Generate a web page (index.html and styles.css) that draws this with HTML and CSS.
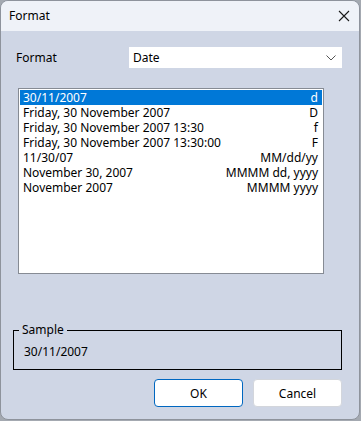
FILE: index.html
```html
<!DOCTYPE html>
<html lang="en">

<head>
    <meta charset="UTF-8">
    <meta name="viewport" content="width=device-width, initial-scale=1.0">
    <title>Format</title>

    <link rel="stylesheet" href="styles.css">
</head>

<body>

    <div class="window">

        <!-- Title bar -->
        <div class="titlebar">
            <span class="title">Format</span>
            <svg class="close" width="12" height="12" viewBox="0 0 12 12">
                <path d="M1 1 L11 11 M11 1 L1 11" stroke="#1a1a1a" stroke-width="1.1" fill="none" />
            </svg>
        </div>

        <div class="content">
            <div class="field-row">
                <label class="field-label">Format</label>
                <div class="combo">
                    <span>Date</span>
                    <svg width="10" height="6" viewBox="0 0 10 6">
                        <path d="M0.5 0.5 L5 5 L9.5 0.5" stroke="#555" stroke-width="1" fill="none" />
                    </svg>
                </div>
            </div>

            <!-- Format list -->
            <div class="listbox">
                <div class="list-row selected"><span>30/11/2007</span><span>d</span></div>
                <div class="list-row"><span>Friday, 30 November 2007</span><span>D</span></div>
                <div class="list-row"><span>Friday, 30 November 2007 13:30</span><span>f</span></div>
                <div class="list-row"><span>Friday, 30 November 2007 13:30:00</span><span>F</span></div>
                <div class="list-row"><span>11/30/07</span><span>MM/dd/yy</span></div>
                <div class="list-row"><span>November 30, 2007</span><span>MMMM dd, yyyy</span></div>
                <div class="list-row"><span>November 2007</span><span>MMMM yyyy</span></div>
            </div>

            <fieldset class="sample">
                <legend>Sample</legend>
                <div class="sample-text">30/11/2007</div>
            </fieldset>

            <div class="buttons">
                <button class="btn btn-default">OK</button>
                <button class="btn">Cancel</button>
            </div>
        </div>
    </div>

</body>

</html>
```

FILE: styles.css
```css
html {
    background-color: #a4a9b1;
}

body {
    margin: 0;
    font-family: "Noto Sans", "Open Sans", sans-serif;
    font-size: 12px;
    color: #000;
}

.window {
    width: 358px;
    height: 418px;
    border: 1px solid #8e939c;
    border-radius: 8px;
    overflow: hidden;
    background-color: #cfd6e5;
    display: flex;
    flex-direction: column;
}

.titlebar {
    height: 30px;
    background-color: #eff2f8;
    display: flex;
    align-items: center;
    justify-content: space-between;
    padding: 0 8px 0 8px;
}

.title {
    line-height: 16px;
}

.close {
    margin-right: 1px;
}

.content {
    display: flex;
    flex-direction: column;
    padding: 16px 17px 0 12px;
}

.field-row {
    display: flex;
    align-items: center;
    padding-left: 3px;
}

.field-label {
    width: 113px;
    line-height: 16px;
}

.combo {
    flex: 1;
    height: 21px;
    background-color: #fff;
    display: flex;
    align-items: center;
    justify-content: space-between;
    padding: 0 6px 0 4px;
}

.listbox {
    margin: 20px 0 0 5px;
    width: 302px;
    height: 182px;
    background-color: #fff;
    border: 1px solid #868b94;
    padding: 1px;
}

.list-row {
    display: flex;
    justify-content: space-between;
    height: 15px;
    line-height: 15px;
    padding: 0 4px 0 3px;
}

.list-row.selected {
    background-color: #0078d7;
    color: #fff;
}

.sample {
    margin: 48px 0 0 0;
    border: 1px solid #000;
    padding: 6px 6px 9px 6px;
    min-width: 0;
}

.sample legend {
    padding: 0 3px;
    margin-left: -1px;
    line-height: 16px;
}

.sample-text {
    padding-left: 4px;
    line-height: 16px;
}

.buttons {
    display: flex;
    justify-content: flex-end;
    gap: 10px;
    margin-top: 9px;
}

.btn {
    width: 89px;
    height: 28px;
    background-color: #fff;
    border: 1px solid #d3d6dc;
    border-radius: 4px;
    font-family: inherit;
    font-size: 12px;
    color: #000;
    padding: 0;
}

.btn-default {
    border-color: #0067c0;
}
```
